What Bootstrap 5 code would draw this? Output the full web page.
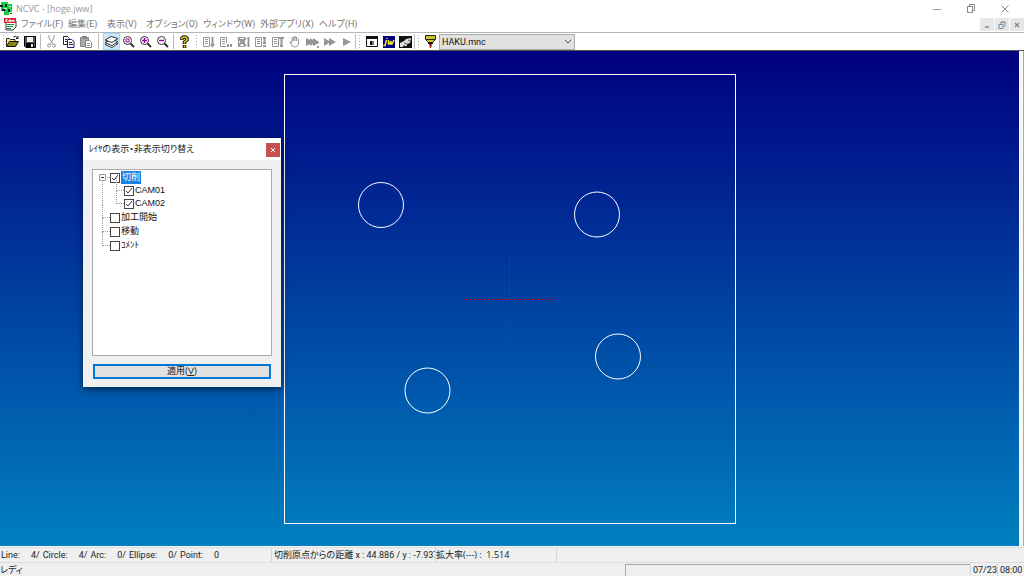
<!DOCTYPE html>
<html lang="ja">
<head>
<meta charset="utf-8">
<meta name="viewport" content="width=device-width, initial-scale=1">
<title>NCVC - [hoge.jww]</title>
<link href="https://cdn.jsdelivr.net/npm/bootstrap@5.3.0/dist/css/bootstrap.min.css" rel="stylesheet">
<style>
body{font:9px/13px "Open Sans","Noto Sans CJK JP",sans-serif;font-feature-settings:"palt";color:#222;background:#efefef;overflow:hidden}
button{border:0;background:none;padding:0;color:inherit;border-radius:0}
svg{display:block;flex:none}
.titlebar{height:17px;color:#999;background:#fff}
.titlebar .caption{margin-left:3px}
.win-buttons{gap:24px;padding-right:14px}
.menubar{height:15px;background:#fff;color:#777;border-bottom:1px solid #b4b4b4;box-sizing:content-box}
.menubar a{color:inherit;text-decoration:none;white-space:nowrap}
.menu-list{display:grid;grid-template-columns:47px 39px 39px 57px 57px 59px 40px;margin-left:4px;font-family:Roboto,"Noto Sans CJK JP",sans-serif}
.mdi-buttons{gap:1px}
.mdi-buttons button{width:14px;height:13px;background:#e6e6e6;display:grid;place-items:center}
.tools{height:18px;background:#fff;border-bottom:1px solid #555}
.tools button{width:17px;height:17px;display:grid;place-items:center}
.tools button.on{background:#cce8ff;box-shadow:inset 0 0 0 1px #a5d5fa}
.tools button:disabled{color:#969696}
.sep{width:1px;height:15px;background:#bbb}
.sep.gap-sep{margin:0 2px}
.grip{width:1px;height:13px;margin:0 3px;background:repeating-linear-gradient(#aaa 0 1px,transparent 1px 3px)}
.run-group{width:155px}
.tool-icon{margin:0 2px}
.machine{width:136px;height:16px;border:1px solid #aaa;border-radius:0;background:#e1e1e1;color:#111;padding:0 2px;font:9px/14px Roboto,sans-serif;appearance:none}
.machine-box .chev{position:absolute;right:3px;top:5px;pointer-events:none}
.workspace{background:#f8f8f8;padding-right:5px;border-bottom:1px solid #f8f8f8;min-height:495px;box-shadow:inset -1px 0 #aaa}
.drawing{background:linear-gradient(#000080,#0080c0)}
.layer-dialog{left:83px;top:87px;width:198px;background:#f0f0f0;box-shadow:0 2px 7px #0009}
.layer-dialog .head{height:22px;background:#fff;padding:0 1px 0 6px;font-family:"Liberation Sans","Noto Sans CJK JP",sans-serif}
.layer-dialog .close-btn{width:14px;height:14px;background:#c75050;color:#fff;display:grid;place-items:center;margin-top:2px}
.tree-box{height:187px;margin:9px 9px 8px;background:#fff;border:1px solid #aaa;padding:1px 0 0 17px;font-family:"Liberation Sans","Noto Sans CJK JP",sans-serif;color:#111}
.tree-box ul{list-style:none;margin:0;padding:0}
.tree-box li{position:relative}
.tree-box li+li{margin-top:1px}
.tree-box li li+li{margin-top:0}
.tree-box li li{margin-left:14px}
.tree-box li::before{content:"";position:absolute;left:-8px;top:6px;width:8px;border-top:1px dotted #999}
.tree-box li::after{content:"";position:absolute;left:-8px;top:-7px;height:14px;border-left:1px dotted #999}
.tree-box ul.roots>li:first-child::after{top:6px;height:28px}
.tree-box label{display:flex;align-items:center;gap:1px;height:13px;width:max-content}
.tree-box input{appearance:none;width:10px;height:10px;border:1px solid #444;margin:0;background:#fff}
.tree-box input:checked{background:#fff url("data:image/svg+xml,%3Csvg xmlns='http://www.w3.org/2000/svg' viewBox='0 0 8 8'%3E%3Cpath d='M1 4l2 2 4-5' fill='none' stroke='%23333'/%3E%3C/svg%3E")}
.tree-box .picked{background:#1683e4;color:#fff;line-height:13px;padding:0 1px}
.expander{position:absolute;left:-11px;top:3px;z-index:1;width:7px;height:7px;background:#fff}
.apply{height:15px;margin:0 9px 8px 10px;border:2px solid #0078d7;background:#e1e1e1;line-height:11px;font-family:"Liberation Sans","Noto Sans CJK JP",sans-serif;width:calc(100% - 20px)}
.status-row{height:15px;line-height:14px;border-top:1px solid #ddd;white-space:pre;font-family:Roboto,"Noto Sans CJK JP",sans-serif}
.stats{width:271px;padding-left:1px;gap:3px}
.stats b{font-weight:400;margin-left:8px}
.pane{border-left:1px solid #d6d6d6;padding-left:2px}
.distance{width:164px;overflow:hidden}
.scale{width:121px;padding-left:0;font-family:"Open Sans","Noto Sans CJK JP",sans-serif}
.progress-pane{width:345px;height:12px;border-left:1px solid #aaa;border-top:1px solid #aaa}
.clock{width:27px}
</style>
</head>
<body>
<div class="d-flex flex-column min-vh-100">
  <header class="titlebar d-flex align-items-center">
    <svg width="13" height="13" viewBox="0 0 13 13"><path fill="#14d43c" d="M1 0h7v2h4v8H9v3H4V9H1z"/><path fill="#123" d="M0 3h3v2H0zM5 2h2v3H5zM2 7h3v2H2zM8 7h2v3H8zM10 11h2v1h-2z"/><path fill="#bfffc8" d="M4 6h3v1H4zM9 4h2v1H9z"/></svg>
    <span class="caption">NCVC - [hoge.jww]</span>
    <div class="win-buttons d-flex align-items-center ms-auto">
      <button aria-label="最小化"><svg width="10" height="10"><path d="M1 5.500h8" stroke="#999"/></svg></button>
      <button aria-label="元に戻す"><svg width="10" height="10" fill="none" stroke="#888"><path d="M1.500 2.500h5v6h-5zM3.500 2V.5h5v6H7"/></svg></button>
      <button aria-label="閉じる"><svg width="10" height="10"><path d="M1.500 1.500l7 7m0-7l-7 7" stroke="#888"/></svg></button>
    </div>
  </header>

  <nav class="menubar d-flex align-items-center">
    <svg width="13" height="13" viewBox="0 0 13 13" class="ms-1"><path fill="#fff" stroke="#333" d="M2 3h10v6l-3 3H2z"/><path fill="#e02030" d="M0 0h12v5H0z"/><path stroke="#fff" fill="none" d="M3.500 1.500H2v2h1.500M5 4V2h1.500v2M8 4V2l1 1 1-1v2"/><path stroke="#189540" d="M3 6.500h7M3 8.500h6M3 10.500h4"/></svg>
    <div class="menu-list">
      <a href="#">ファイル(F)</a><a href="#">編集(E)</a><a href="#">表示(V)</a><a href="#">オプション(O)</a><a href="#">ウィンドウ(W)</a><a href="#">外部アプリ(X)</a><a href="#">ヘルプ(H)</a>
    </div>
    <div class="mdi-buttons d-flex ms-auto">
      <button aria-label="文書を最小化"><svg width="8" height="8"><path d="M2 6h4" stroke="#7890a8" stroke-width="1.500"/></svg></button>
      <button aria-label="文書を元に戻す"><svg width="8" height="8" fill="none" stroke="#7890a8"><path d="M1 3.500h4v4H1zM3 3V1h4v4H6M3 1.500h4"/></svg></button>
      <button aria-label="文書を閉じる"><svg width="8" height="8"><path d="M2 2l4 4m0-4L2 6" stroke="#7890a8" stroke-width="1.500"/></svg></button>
    </div>
  </nav>

  <div class="tools d-flex align-items-center" role="toolbar">
    <span class="grip me-0"></span>
    <button aria-label="開く"><svg width="13" height="13" viewBox="0 0 13 13"><path fill="#f5e86b" stroke="#222" d="M.5 11V3.500h3l1 1H9V6"/><path fill="#8a8414" stroke="#111" d="M.5 11.500L3.500 6.500h9l-3 5z"/><path fill="none" stroke="#111" d="M7.500 2q2-2 4 1M12 1v2.500h-2"/></svg></button>
    <button aria-label="保存"><svg width="12" height="12" viewBox="0 0 12 12"><path fill="#555" stroke="#000" d="M.5.500h11v11H2l-1.500-1.500z"/><path fill="#f4f4f4" d="M3 1h6v5H3z"/><path fill="#000" d="M2 7h8v4H2z"/><path fill="#fff" d="M7 8h2v3H7z"/></svg></button>
    <span class="sep gap-sep"></span>
    <button aria-label="切り取り" disabled><svg width="11" height="13" viewBox="0 0 11 13" fill="none" stroke="currentColor"><path d="M3 0v3l4 6M8 0v3L4 9"/><circle cx="3" cy="10.500" r="1.500"/><circle cx="8" cy="10.500" r="1.500"/></svg></button>
    <button aria-label="コピー"><svg width="13" height="12" viewBox="0 0 13 12" fill="#fff" stroke="#222"><path d="M1.500.5h4l2 2v6h-6z"/><path stroke="#1b2175" d="M5.500 3.500h4l2.500 2v6H5.500z"/><path d="M3 3.500h2M3 5.500h2M7 6.500h3M7 8.500h4"/></svg></button>
    <button aria-label="貼り付け" disabled><svg width="13" height="13" viewBox="0 0 13 13"><path fill="#aaa" stroke="#888" d="M1.500 2.500h8v9h-8z"/><path fill="#888" d="M3 1h5v3H3z"/><path fill="#fff" stroke="#888" d="M6.500 5.500h4l2 2v5h-6z"/><path stroke="#999" d="M8 8.500h3M8 10.500h3"/></svg></button>
    <span class="sep mx-1"></span>
    <button class="on" aria-label="レイヤ"><svg width="15" height="13" viewBox="0 0 15 13" fill="#fff" stroke="#333"><path d="M1 9.500l6-3 7 2-6 4z"/><path d="M1 7.500l6-3 7 2-6 4z"/><path d="M1 5l6-3.500 7 2-6 4z"/></svg></button>
    <button aria-label="全体表示"><svg width="13" height="13" viewBox="0 0 13 13" fill="none" stroke="#333"><circle cx="5.500" cy="5.500" r="4"/><path stroke="#a000a0" d="M4 4h3v3H4z"/><path stroke-width="2" d="M8.500 8.500l3.500 3.500"/></svg></button>
    <button aria-label="拡大"><svg width="13" height="13" viewBox="0 0 13 13" fill="none" stroke="#333"><circle cx="5.500" cy="5.500" r="4"/><path stroke="#a000a0" stroke-width="1.500" d="M3 5.500h5M5.500 3v5"/><path stroke-width="2" d="M8.500 8.500l3.500 3.500"/></svg></button>
    <button aria-label="縮小"><svg width="13" height="13" viewBox="0 0 13 13" fill="none" stroke="#333"><circle cx="5.500" cy="5.500" r="4"/><path stroke="#a000a0" stroke-width="1.500" d="M3 5.500h5"/><path stroke-width="2" d="M8.500 8.500l3.500 3.500"/></svg></button>
    <span class="sep gap-sep"></span>
    <button aria-label="ヘルプ"><svg width="9" height="13" viewBox="0 0 9 13" fill="none"><path stroke="#111" stroke-width="3.500" d="M2 5V3q2.500-2 5 0v2L4.500 7v2M4.500 10v3"/><path stroke="#e8dc28" stroke-width="1.500" d="M2 4.500V3q2.500-2 5 0v2L4.500 7v1.500M4.500 10.500v2"/></svg></button>
    <span class="grip"></span>
    <div class="run-group d-flex justify-content-between">
      <button disabled aria-label="ステップイン"><svg width="13" height="12" viewBox="0 0 13 12" fill="none" stroke="currentColor"><path d="M1.500 1.500h6v9h-6zM3 3.500h3M3 5.500h3M3 7.500h3"/><path stroke-width="2" d="M10.500 1v8M9 8l1.500 2L12 8"/></svg></button>
      <button disabled aria-label="一時停止"><svg width="13" height="12" viewBox="0 0 13 12" fill="none" stroke="currentColor"><path d="M7.500 7V1.500h-6v9H7M3 3.500h3M3 5.500h3M3 7.500h3"/><path stroke-width="2" d="M9 8v3M12 8v3"/></svg></button>
      <button disabled aria-label="中断"><svg width="13" height="12" viewBox="0 0 13 12" fill="none" stroke="currentColor"><path d="M1.500 1.500h6v9h-6zM3 3.500h3M3 7.500h3"/><path stroke-width="2" d="M1 2l8 8M9 2l-8 8M11.500 1v10"/></svg></button>
      <button disabled aria-label="前へ"><svg width="13" height="12" viewBox="0 0 13 12" fill="none" stroke="currentColor"><path d="M1.500 1.500h6v9h-6zM3 3.500h3M3 5.500h3M3 7.500h3"/><path stroke-width="2" d="M9 2h3M10.500 2v4M9 7h3M9 10h3"/></svg></button>
      <button disabled aria-label="先頭へ"><svg width="13" height="12" viewBox="0 0 13 12" fill="none" stroke="currentColor"><path d="M1.500 1.500h6v9h-6zM3 3.500h3M3 5.500h3M3 7.500h3"/><path stroke-width="2" d="M8 2h5M10.500 2v8M9 10h3"/></svg></button>
      <button disabled aria-label="手動"><svg width="12" height="13" viewBox="0 0 12 13" fill="#fff" stroke="currentColor"><path d="M3 7V3q1-1 1.500 0V2q1-1 1.500 0v1-1q1-1 1.500 0v2q1-1 2 0v5q-1 3-4 3Q3 12 1 7q1-1 2 1M4.500 3v3M6 3v3M7.500 3v3"/></svg></button>
      <button disabled aria-label="最高速"><svg width="13" height="12" viewBox="0 0 13 12" fill="currentColor"><path d="M0 2l4 2V2l3 2V2l6 4v1l-6 3V8L4 10V8L0 10zM11 10h2v2h-2z"/></svg></button>
      <button disabled aria-label="早送り"><svg width="13" height="12" viewBox="0 0 13 12" fill="currentColor"><path d="M1 2l5 3V2l7 4-7 4V7l-5 3z"/></svg></button>
      <button disabled aria-label="再生"><svg width="12" height="12" viewBox="0 0 12 12" fill="currentColor"><path d="M2 2l8 4-8 4z"/></svg></button>
    </div>
    <span class="sep"></span><span class="grip"></span>
    <button aria-label="編集ソフト"><svg width="12" height="11" viewBox="0 0 12 11"><path fill="#fff" stroke="#111" d="M.5.500h11v10H.5z"/><path fill="#111" d="M0 0h12v3H0zM4 5h2v4H4z"/><path fill="#777" d="M6 5h2v4H6z"/></svg></button>
    <button aria-label="jw"><svg width="12" height="12" viewBox="0 0 12 12"><path fill="#000080" d="M0 0h12v12H0z"/><path fill="none" stroke="#f4ee18" stroke-width="1.500" d="M3.500 4L2 9.500H.5M4 2v1M5.500 4v4h1L8 5v3h1l2-4"/></svg></button>
    <button aria-label="3D"><svg width="13" height="12" viewBox="0 0 13 12"><path fill="#111" d="M0 0h13v12H0z"/><path fill="#ddd" d="M1 7l4-2 2-2 5-1-1 5-3 1v2H6L5 9l-1 2H1z"/><path stroke="#555" d="M5 7l3 1M9 4l2 1"/></svg></button>
    <span class="sep"></span><span class="grip"></span>
    <svg width="13" height="13" viewBox="0 0 13 13" class="tool-icon"><path fill="#c9c522" stroke="#222" d="M1.500.5h10v4l-3 3h-4l-3-3z"/><path stroke="#222" d="M2 4.500h9"/><path fill="#111" d="M4 7h5v2H4z"/><path fill="#a01818" d="M5 9h3l-1 4H6z"/></svg>
    <div class="machine-box position-relative">
      <select class="machine d-block" aria-label="機械設定"><option>HAKU.mnc</option></select>
      <svg class="chev" width="8" height="6"><path d="M1 1l3 3 3-3" fill="none" stroke="#555"/></svg>
    </div>
  </div>

  <main class="workspace position-relative flex-grow-1">
    <svg class="drawing w-100 h-100" viewBox="0 0 1019 495" fill="none" stroke="#fff">
      <rect x="284.500" y="23.500" width="451" height="449"/>
      <circle cx="381" cy="154" r="22.500"/><circle cx="597" cy="163.500" r="22.500"/>
      <circle cx="427.500" cy="339.500" r="22.500"/><circle cx="618" cy="305.500" r="22.500"/>
      <path stroke="#d80010" stroke-dasharray="2.500 2" d="M464.500 248.500h88M509.500 206.500v88"/>
    </svg>
    <section class="layer-dialog position-absolute" role="dialog" aria-labelledby="layer-title">
      <div class="head d-flex justify-content-between align-items-center">
        <span id="layer-title">ﾚｲﾔの表示・非表示切り替え</span>
        <button class="close-btn" aria-label="閉じる"><svg width="6" height="6"><path d="M1 1l4 4m0-4L1 5" stroke="#fff"/></svg></button>
      </div>
      <div class="tree-box">
        <ul class="roots">
          <li><svg class="expander" viewBox="0 0 7 7" fill="none" stroke="#999"><path d="M.5.500h6v6h-6z"/><path stroke="#335" d="M2 3.500h3"/></svg>
            <label><input type="checkbox" checked><span class="picked">切削</span></label>
            <ul>
              <li><label><input type="checkbox" checked>CAM01</label></li>
              <li><label><input type="checkbox" checked>CAM02</label></li>
            </ul>
          </li>
          <li><label><input type="checkbox">加工開始</label></li>
          <li><label><input type="checkbox">移動</label></li>
          <li><label><input type="checkbox">ｺﾒﾝﾄ</label></li>
        </ul>
      </div>
      <button class="apply d-block">適用(<u>V</u>)</button>
    </section>
  </main>

  <footer>
    <div class="status-row d-flex">
      <div class="stats d-flex"><span>Line:</span><b>4/</b><span>Circle:</span><b>4/</b><span>Arc:</span><b>0/</b><span>Ellipse:</span><b>0/</b><span>Point:</span><b>0</b></div>
      <div class="pane distance">切削原点からの距離 x : 44.886 / y : -7.937</div>
      <div class="pane scale">拡大率(---) :  1.514</div>
      <div class="pane"></div>
    </div>
    <div class="status-row d-flex align-items-center">
      <span>レディ</span>
      <div class="progress-pane ms-auto"></div>
      <span class="pane clock">07/23</span><span class="pane clock">08:00</span>
    </div>
  </footer>
</div>
<script src="https://cdn.jsdelivr.net/npm/bootstrap@5.3.0/dist/js/bootstrap.bundle.min.js"></script>
</body>
</html>
